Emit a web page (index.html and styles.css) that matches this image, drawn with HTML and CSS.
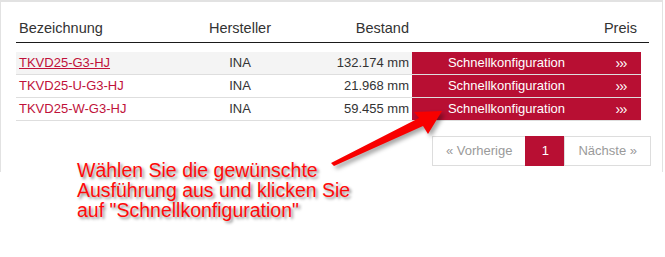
FILE: index.html
```html
<!DOCTYPE html>
<html lang="de">
<head>
    <meta charset="UTF-8">
    <title>Varianten</title>
    <link rel="stylesheet" href="styles.css">
</head>
<body>
    <div class="panel">
        <div class="cols thead">
            <div class="c-name">Bezeichnung</div>
            <div class="c-maker">Hersteller</div>
            <div class="c-stock">Bestand</div>
            <div class="c-price">Preis</div>
        </div>
        <div class="tbody">
            <div class="cols row hover">
                <div class="c-name"><a href="#" class="hl">TKVD25-G3-HJ</a></div>
                <div class="c-maker">INA</div>
                <div class="c-stock">132.174 mm</div>
                <a href="#" class="go"><span class="go-label">Schnellkonfiguration</span><span class="go-arrows">›››</span></a>
            </div>
            <div class="cols row">
                <div class="c-name"><a href="#">TKVD25-U-G3-HJ</a></div>
                <div class="c-maker">INA</div>
                <div class="c-stock">21.968 mm</div>
                <a href="#" class="go"><span class="go-label">Schnellkonfiguration</span><span class="go-arrows">›››</span></a>
            </div>
            <div class="cols row">
                <div class="c-name"><a href="#">TKVD25-W-G3-HJ</a></div>
                <div class="c-maker">INA</div>
                <div class="c-stock">59.455 mm</div>
                <a href="#" class="go"><span class="go-label">Schnellkonfiguration</span><span class="go-arrows">›››</span></a>
            </div>
        </div>
        <div class="pager">
            <span class="page">« Vorherige</span>
            <span class="page active">1</span>
            <span class="page">Nächste »</span>
        </div>
    </div>

    <p class="note">Wählen Sie die gewünschte<br>Ausführung aus und klicken Sie<br>auf "Schnellkonfiguration"</p>

    <!-- annotation arrow drawn over the table -->
    <svg class="arrow" width="665" height="257" viewBox="0 0 665 257">
        <polygon points="331,163 419,118 414,112 442,111 428,134 423,126 334,166" fill="#f80000"/>
    </svg>
</body>
</html>
```

FILE: styles.css
```css
body {
    margin: 0;
    background-color: #ffffff;
    font-family: 'Liberation Sans', Arial, sans-serif;
    color: #333;
    position: relative;
    height: 257px;
    overflow: hidden;
}
.panel {
    box-sizing: border-box;
    width: 663px;
    height: 172px;
    border-top: 2px solid #e2e2e2;
    border-left: 1px solid #e2e2e2;
    border-right: 1px solid #e2e2e2;
    padding: 0 13px 0 15px;
}
.cols {
    display: grid;
    grid-template-columns: 150px 148px 98px 1fr;
}
.c-name {
    padding-left: 3px;
}
.c-maker {
    text-align: center;
}
.c-stock {
    text-align: right;
    padding-right: 3px;
}
.thead {
    font-size: 14.5px;
    line-height: 20px;
    padding: 16px 0 4px;
    border-bottom: 1px solid #1a1a1a;
}
.thead .c-price {
    text-align: right;
    padding-right: 12px;
}
.tbody {
    margin: 9px 8px 0 0;
}
.row {
    font-size: 13px;
    height: 22px;
    line-height: 22px;
    border-bottom: 1px solid #dedede;
}
.row.hover {
    background-color: #f4f4f4;
}
.row a {
    color: #c0113a;
    text-decoration: none;
}
.row a.hl {
    text-decoration: underline;
}
.row .go {
    display: flex;
    background-color: #b80f33;
    color: #ffffff;
}
.go-label {
    flex: 1;
    text-align: center;
}
.go-arrows {
    width: 40px;
    text-align: center;
    font-size: 14px;
    letter-spacing: -1px;
}
.pager {
    display: flex;
    justify-content: flex-end;
    margin: 15px -2px 0 0;
}
.page {
    font-size: 13px;
    line-height: 20px;
    padding: 4px 13px;
    border: 1px solid #dddddd;
    color: #9a9a9a;
    margin-left: -1px;
}
.page.active {
    box-sizing: border-box;
    width: 40px;
    padding: 4px 0;
    text-align: center;
    background-color: #b80f33;
    border-color: #b80f33;
    color: #ffffff;
}
.note {
    position: absolute;
    left: 77px;
    top: 160px;
    margin: 0;
    font-size: 19.5px;
    line-height: 20px;
    color: #ff0a0a;
    text-shadow: 2px 2px 3px rgba(0, 0, 0, 0.45);
}
.arrow {
    position: absolute;
    top: 0;
    left: 0;
    pointer-events: none;
    filter: drop-shadow(3px 3px 2px rgba(0, 0, 0, 0.35));
}
```
